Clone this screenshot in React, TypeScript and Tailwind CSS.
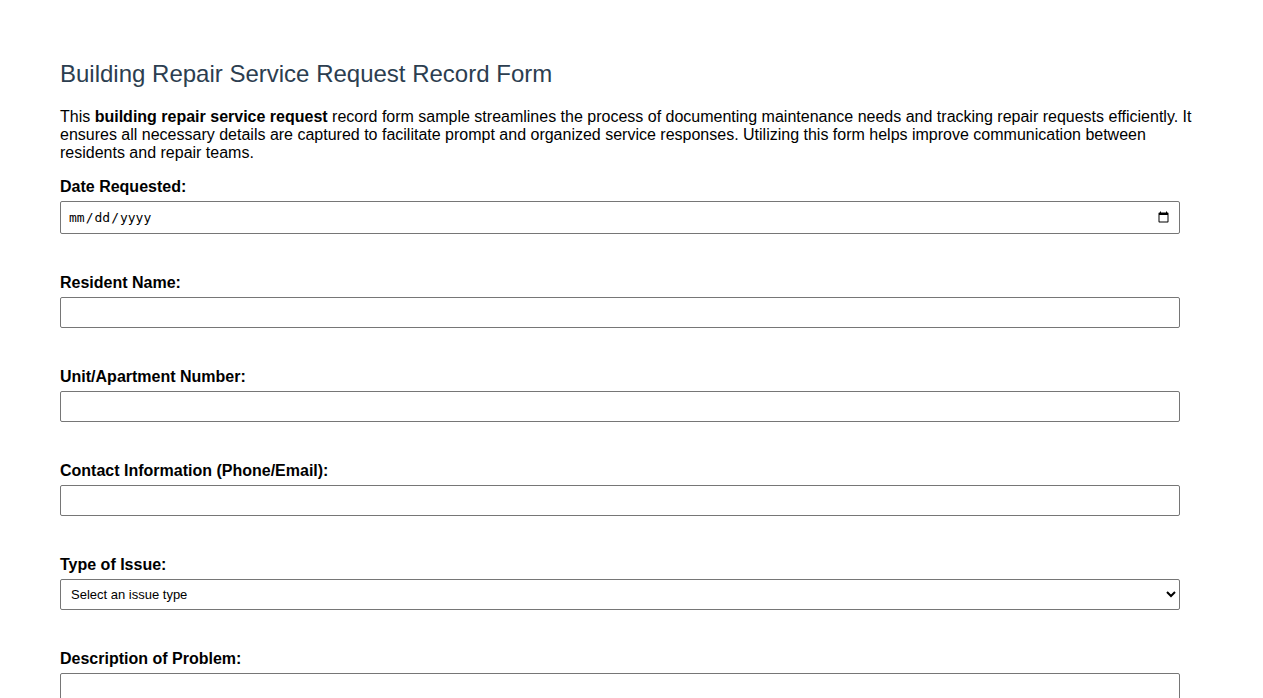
const fields = [
  { label: "Resident Name:", id: "residentName" },
  { label: "Unit/Apartment Number:", id: "unitNumber" },
  { label: "Contact Information (Phone/Email):", id: "contact" },
];

const App = () => {
  return (
    <main className="min-h-screen bg-white text-black font-['Liberation_Sans',Arial,sans-serif]">
      <div className="px-[60px] pt-[59px] pb-10">
        <h1 className="text-[24px] leading-[29px] text-[#2c3e50] mb-[20px]">
          Building Repair Service Request Record Form
        </h1>
        <p className="text-[16px] leading-[18px] mb-[16px] pr-[10px]">
          This <strong>building repair service request</strong> record form sample streamlines the process of documenting
          maintenance needs and tracking repair requests efficiently. It ensures all necessary details are captured to
          facilitate prompt and organized service responses. Utilizing this form helps improve communication between
          residents and repair teams.
        </p>

        <form className="flex flex-col">
          <div className="mb-[40px]">
            <label htmlFor="dateRequested" className="block font-bold text-[16px] leading-[18px] mb-[5px]">
              Date Requested:
            </label>
            <input
              id="dateRequested"
              type="date"
              className="block w-[1120px] h-[33px] px-[7px] border border-[#767676] rounded-[2px] text-[13px] font-['DejaVu_Sans_Mono',monospace]"
            />
          </div>

          {fields.map((f) => (
            <div key={f.id} className="mb-[40px]">
              <label htmlFor={f.id} className="block font-bold text-[16px] leading-[18px] mb-[5px]">
                {f.label}
              </label>
              <input
                id={f.id}
                type="text"
                className="block w-[1120px] h-[31px] px-[7px] border border-[#767676] rounded-[2px] text-[13px]"
              />
            </div>
          ))}

          <div className="mb-[40px]">
            <label htmlFor="issueType" className="block font-bold text-[16px] leading-[18px] mb-[5px]">
              Type of Issue:
            </label>
            <select
              id="issueType"
              defaultValue=""
              className="block w-[1120px] h-[31px] px-[6px] border border-[#767676] rounded-[2px] text-[13px] bg-white"
            >
              <option value="">Select an issue type</option>
              <option value="plumbing">Plumbing</option>
              <option value="electrical">Electrical</option>
              <option value="hvac">Heating / Cooling</option>
              <option value="structural">Structural</option>
              <option value="other">Other</option>
            </select>
          </div>

          <div className="mb-[40px]">
            <label htmlFor="description" className="block font-bold text-[16px] leading-[18px] mb-[5px]">
              Description of Problem:
            </label>
            <textarea
              id="description"
              rows={5}
              className="block w-[1120px] px-[7px] py-[6px] border border-[#767676] rounded-[2px] text-[13px]"
            />
          </div>
        </form>
      </div>
    </main>
  );
};

export default App;
